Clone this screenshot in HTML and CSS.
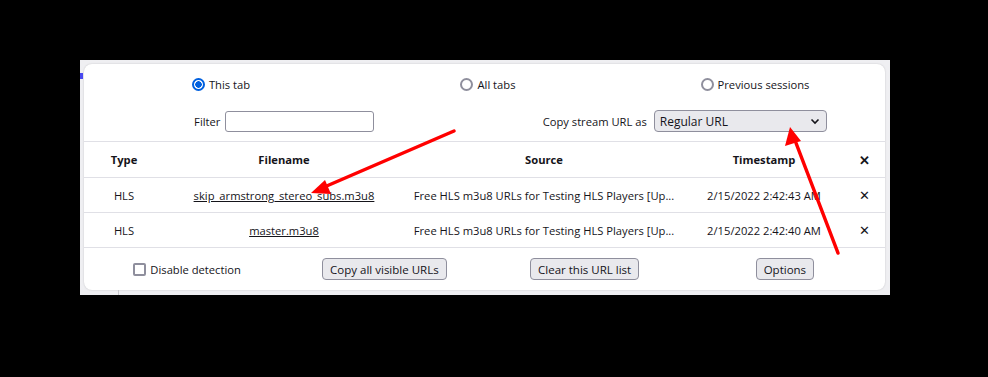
FILE: index.html
```html
<!DOCTYPE html>
<html>
<head>
<meta charset="utf-8">
<link rel="stylesheet" href="styles.css">
</head>
<body>
<div class="frame">
  <span class="blue-mark"></span>
  <div class="panel">
    <div class="radios">
      <label class="cell"><span class="radio on"></span>This tab</label>
      <label class="cell"><span class="radio"></span>All tabs</label>
      <label class="cell"><span class="radio"></span>Previous sessions</label>
    </div>
    <div class="controls">
      <div class="cell"><span class="lbl">Filter</span><span class="input"></span></div>
      <div class="cell"><span class="lbl">Copy stream URL as</span>
        <span class="select">Regular URL
          <svg class="chev" width="10" height="7" viewBox="0 0 10 7"><path d="M1.5 1.5 L5 5 L8.5 1.5" fill="none" stroke="#15141a" stroke-width="1.6"/></svg>
        </span>
      </div>
    </div>
    <div class="table">
      <div class="row head">
        <div class="c type">Type</div>
        <div class="c file">Filename</div>
        <div class="c src">Source</div>
        <div class="c ts">Timestamp</div>
        <div class="c x">✕</div>
      </div>
      <div class="row">
        <div class="c type">HLS</div>
        <div class="c file"><span class="link">skip_armstrong_stereo_subs.m3u8</span></div>
        <div class="c src">Free HLS m3u8 URLs for Testing HLS Players [Up...</div>
        <div class="c ts">2/15/2022 2:42:43 AM</div>
        <div class="c x">✕</div>
      </div>
      <div class="row">
        <div class="c type">HLS</div>
        <div class="c file"><span class="link">master.m3u8</span></div>
        <div class="c src">Free HLS m3u8 URLs for Testing HLS Players [Up...</div>
        <div class="c ts">2/15/2022 2:42:40 AM</div>
        <div class="c x">✕</div>
      </div>
    </div>
    <div class="footer">
      <label class="cell chk-cell"><span class="check"></span>Disable detection</label>
      <div class="cell"><span class="btn">Copy all visible URLs</span></div>
      <div class="cell"><span class="btn">Clear this URL list</span></div>
      <div class="cell"><span class="btn">Options</span></div>
    </div>
  </div>
  <span class="tick"></span>
</div>
<svg class="arrows" width="988" height="377" viewBox="0 0 988 377">
  <line x1="454" y1="131" x2="322" y2="188" stroke="#f00" stroke-width="3.5" stroke-linecap="round"/>
  <polygon points="311,193 325,180 331,194" fill="#f00"/>
  <line x1="838" y1="253" x2="796" y2="143" stroke="#f00" stroke-width="3.5" stroke-linecap="round"/>
  <polygon points="790,127 785,146 801,141" fill="#f00"/>
</svg>
</body>
</html>
```
FILE: styles.css
```css
* { box-sizing: border-box; }
body {
  margin: 0;
  background: #000;
  width: 988px;
  height: 377px;
  overflow: hidden;
  font-family: "Open Sans", "Noto Sans", sans-serif;
  font-size: 11.2px;
  color: #15141a;
}
.frame {
  position: relative;
  margin: 60px 0 0 80px;
  width: 810px;
  height: 235px;
  background: #efeff2;
  padding: 4px 0 0 4px;
}
.blue-mark {
  position: absolute;
  left: 0;
  top: 13px;
  width: 3px;
  height: 6px;
  background: #4a4af0;
}
.tick {
  position: absolute;
  left: 38px;
  bottom: 0;
  width: 1px;
  height: 5px;
  background: #c8c8cc;
}
.panel {
  width: 801px;
  height: 226px;
  background: #fff;
  border-radius: 8px;
  box-shadow: 0 0 2px rgba(0,0,0,0.18);
  display: flex;
  flex-direction: column;
}
.cell {
  display: flex;
  align-items: center;
  justify-content: center;
}
.radios {
  height: 40px;
  display: grid;
  grid-template-columns: 1fr 1fr 1fr;
}
.radios .cell { padding-left: 7px; }
.radio {
  width: 13px;
  height: 13px;
  border-radius: 50%;
  border: 2px solid #8f8f9d;
  margin-right: 4px;
  flex: none;
}
.radio.on {
  border: 2px solid #0060df;
  background: radial-gradient(circle, #0060df 0 3px, #fff 3.5px);
}
.controls {
  height: 38px;
  padding-bottom: 3px;
  display: grid;
  grid-template-columns: 1fr 1fr;
  border-bottom: 1px solid #e0e0e6;
}
.lbl { margin-right: 5px; }
.input {
  width: 149px;
  height: 21px;
  border: 1px solid #8f8f9d;
  border-radius: 3px;
  background: #fff;
}
.select {
  width: 173px;
  height: 22px;
  border: 1px solid #8f8f9d;
  border-radius: 4px;
  background: #e9e9ed;
  display: flex;
  align-items: center;
  justify-content: space-between;
  padding: 0 6px 0 5px;
  font-size: 12px;
  margin-left: 2px;
}
.row {
  display: grid;
  grid-template-columns: 80px 240px 280px 160px 1fr;
  height: 35px;
  border-bottom: 1px solid #e0e0e6;
  align-items: center;
}
.row.head { height: 36px; font-weight: 700; }
.c { text-align: center; white-space: nowrap; }
.c.x { font-size: 13px; font-weight: 400; }
.head .c.x { font-weight: 700; }
.link { text-decoration: underline; }
.footer {
  flex: 1;
  display: grid;
  grid-template-columns: 1fr 1fr 1fr 1fr;
}
.chk-cell { padding-left: 6px; }
.check {
  width: 13px;
  height: 13px;
  border: 2px solid #8f8f9d;
  border-radius: 2px;
  margin-right: 4px;
}
.btn {
  display: inline-flex;
  align-items: center;
  height: 22px;
  padding: 0 7px;
  border: 1px solid #8f8f9d;
  border-radius: 4px;
  background: #e9e9ed;
  font-size: 11.5px;
}
.arrows {
  position: absolute;
  left: 0;
  top: 0;
  pointer-events: none;
}
```
